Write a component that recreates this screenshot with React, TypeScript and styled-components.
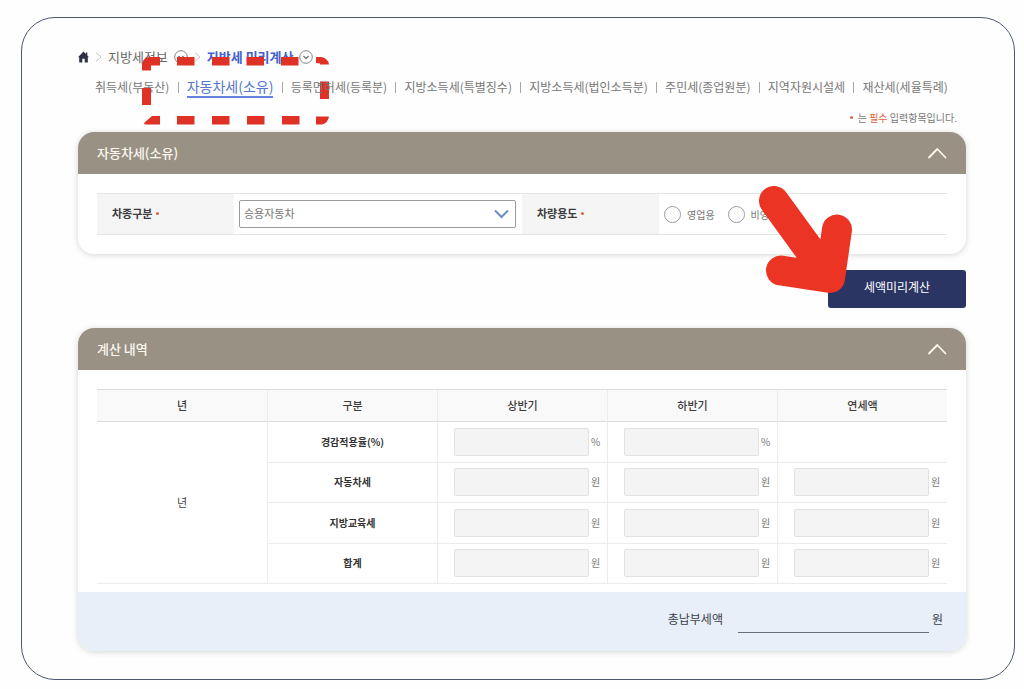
import React from "react";
import styled, { createGlobalStyle } from "styled-components";

const GlobalStyle = createGlobalStyle`
  *, *::before, *::after { box-sizing: border-box; }
  body {
    margin: 0;
    background: #fefefe;
    color: #444;
    font-family: "Noto Sans CJK KR", "Noto Sans", sans-serif;
    font-size: 12px;
  }
  button, input, select { font: inherit; color: inherit; margin: 0; }
  a { color: inherit; text-decoration: none; }
`;

const Frame = styled.main`
  margin: 17px 9px 9px 21px;
  padding: 27px 48px 28px 56px;
  border: 1px solid #4b5872;
  border-radius: 34px;
  background: #fefefe;
`;

const Breadcrumb = styled.nav`
  display: flex;
  align-items: center;
  height: 24px;
  padding-bottom: 1px;
  font-size: 13px;
  color: #6b6b6b;
`;

const CrumbLink = styled.a<{ $current?: boolean }>`
  margin-right: 6px;
  line-height: 20px;
  color: ${(p) => (p.$current ? "#4560cf" : "inherit")};
  font-weight: ${(p) => (p.$current ? 700 : 400)};
`;

const HomeLink = styled.a`
  display: flex;
`;

const CrumbArrow = styled.svg`
  margin: 0 6px;
`;

const CircleButton = styled.button`
  display: flex;
  padding: 0;
  border: 0;
  background: none;
`;

const Tabs = styled.ul`
  display: flex;
  justify-content: space-between;
  align-items: center;
  height: 22px;
  margin: 7px 18px 0 17px;
  padding: 0;
  list-style: none;
  color: #777;
  white-space: nowrap;
`;

const Tab = styled.li`
  position: relative;
`;

const TabDivider = styled.li`
  width: 1px;
  height: 11px;
  background: #a8a8a8;
`;

const TabLink = styled.a<{ $active?: boolean }>`
  display: block;
  line-height: 20px;
  font-size: ${(p) => (p.$active ? 14 : 12)}px;
  color: ${(p) => (p.$active ? "#5577cf" : "inherit")};
  border-bottom: ${(p) => (p.$active ? "2px solid #6383dc" : "0")};
`;

const DashedMark = styled.svg`
  position: absolute;
  left: -45px;
  top: -20px;
  pointer-events: none;
`;

const RequiredNote = styled.p`
  display: flex;
  align-items: center;
  justify-content: flex-end;
  gap: 3px;
  height: 16px;
  margin: 11px 9px 7px;
  font-size: 10px;
  color: #777;
`;

const RequiredWord = styled.em`
  font-style: normal;
  color: #d9673f;
`;

const Dot = styled.span`
  flex: none;
  display: inline-block;
  width: 3px;
  height: 3px;
  margin-right: 2px;
  border-radius: 50%;
  background: #dd6546;
`;

const Panel = styled.section`
  overflow: hidden;
  border-radius: 16px;
  background: #fff;
  box-shadow: 0 1px 6px rgba(0, 0, 0, 0.16);
`;

const PanelHeader = styled.header`
  display: flex;
  align-items: center;
  justify-content: space-between;
  height: 42px;
  padding: 0 19px;
  background: #999183;
  color: #fbf8f2;
`;

const PanelTitle = styled.h2`
  margin: 0;
  padding-bottom: 2px;
  font-size: 13px;
  font-weight: 500;
`;

const CollapseButton = styled.button`
  display: flex;
  padding: 0;
  border: 0;
  background: none;
`;

const FieldRow = styled.div`
  display: grid;
  grid-template-columns: 137px 1fr 137px 1fr;
  height: 42px;
  margin: 19px;
  border-top: 1px solid #e4e4e4;
  border-bottom: 1px solid #e4e4e4;
  color: #777;
`;

const FieldLabel = styled.label`
  display: flex;
  align-items: center;
  gap: 4px;
  padding: 0 0 2px 15px;
  background: #f5f5f5;
  color: #3c3c3c;
  font-size: 11px;
  font-weight: 700;
`;

const SelectBox = styled.div`
  display: grid;
  align-items: center;
  padding: 0 6px 0 5px;
  > * { grid-area: 1 / 1; }
  > svg { justify-self: end; margin-right: 7px; pointer-events: none; }
`;

const Select = styled.select`
  appearance: none;
  width: 100%;
  height: 28px;
  padding: 0 28px 2px 4px;
  border: 1px solid #9b9b9b;
  border-radius: 2px;
  background: #fff;
  font-size: 11px;
`;

const RadioGroup = styled.div`
  display: flex;
  align-items: center;
  gap: 13px;
  padding-left: 5px;
`;

const RadioLabel = styled.label`
  display: flex;
  align-items: center;
  gap: 6px;
  font-size: 10px;
`;

const Radio = styled.input`
  appearance: none;
  width: 17px;
  height: 17px;
  border: 1px solid #9a9a9a;
  border-radius: 50%;
  background: #fff;
  &:checked { box-shadow: inset 0 0 0 4px #fff; background: #2b3563; }
`;

const ActionRow = styled.div`
  display: flex;
  justify-content: flex-end;
  margin: 16px 0 20px;
`;

const ActionAnchor = styled.div`
  position: relative;
`;

const SubmitButton = styled.button`
  display: block;
  width: 138px;
  height: 38px;
  padding: 0 0 5px;
  border: 0;
  border-radius: 3px;
  background: #2b3563;
  color: #fff;
  font-size: 12px;
`;

const ArrowMark = styled.svg`
  position: absolute;
  left: -70px;
  top: -84px;
  pointer-events: none;
`;

const TableWrap = styled.div`
  padding: 19px 19px 8px;
`;

const ResultTable = styled.table`
  width: 100%;
  height: 195px;
  table-layout: fixed;
  border-collapse: separate;
  border-spacing: 0;
  border-top: 1px solid #dcdcdc;
`;

const HeadCell = styled.th`
  height: 32px;
  padding: 0 0 2px;
  background: #f9f9f9;
  border-bottom: 1px solid #dcdcdc;
  color: #3c3c3c;
  font-size: 11px;
  font-weight: 500;
  line-height: 16px;
  & + & { border-left: 1px solid #ececec; }
`;

const YearCell = styled.th`
  padding: 0 0 2px;
  border-bottom: 1px solid #ececec;
  font-size: 11px;
  font-weight: 400;
`;

const RowHead = styled.th`
  padding: 0;
  border-left: 1px solid #ececec;
  border-bottom: 1px solid #ececec;
  color: #333;
  font-size: 10px;
  font-weight: 700;
  line-height: 16px;
`;

const ValueCell = styled.td`
  padding: 0 4px 0 16px;
  border-left: 1px solid #ececec;
  border-bottom: 1px solid #ececec;
`;

const ValueField = styled.label`
  display: flex;
  align-items: center;
  gap: 2px;
  color: #777;
  font-size: 10px;
  line-height: 16px;
`;

const ValueInput = styled.input`
  flex: 1;
  min-width: 0;
  height: 28px;
  padding: 0 6px;
  border: 1px solid #e2e2e2;
  border-radius: 2px;
  background: #f4f4f4;
  text-align: right;
`;

const Unit = styled.span`
  width: 12px;
`;

const TotalBar = styled.footer`
  display: flex;
  align-items: center;
  justify-content: flex-end;
  height: 59px;
  padding: 0 23px 6px;
  background: #e9eff8;
  color: #3a3f4a;
  font-size: 12px;
`;

const TotalInput = styled.input`
  align-self: flex-end;
  width: 191px;
  height: 28px;
  margin: 0 3px 12px 15px;
  padding: 0 4px;
  border: 0;
  border-bottom: 1px solid #6b6f7c;
  background: transparent;
  text-align: right;
`;

const Separator = () => (
  <CrumbArrow width="7" height="12" viewBox="0 0 7 12" fill="none" stroke="#c4c4c4" aria-hidden="true">
    <path d="M1 1.500L6 6L1 10.500" />
  </CrumbArrow>
);

const CircleChevron = ({ label }: { label: string }) => (
  <CircleButton type="button" aria-label={label}>
    <svg width="14" height="14" viewBox="0 0 14 14" fill="none" stroke="#777">
      <circle cx="7" cy="7" r="6.300" strokeWidth="0.900" />
      <path d="M4.400 6L7 8.500L9.600 6" strokeWidth="1.400" />
    </svg>
  </CircleButton>
);

const Collapse = ({ label }: { label: string }) => (
  <CollapseButton type="button" aria-label={label}>
    <svg width="20" height="12" viewBox="0 0 20 12" fill="none" stroke="#fdf6ec" strokeWidth="1.800" strokeLinecap="round" strokeLinejoin="round">
      <path d="M2 10.500L10.300 2L18.500 10.500" />
    </svg>
  </CollapseButton>
);

const tabs = [
  "취득세(부동산)",
  "자동차세(소유)",
  "등록면허세(등록분)",
  "지방소득세(특별징수)",
  "지방소득세(법인소득분)",
  "주민세(종업원분)",
  "지역자원시설세",
  "재산세(세율특례)",
];
const activeTab = tabs[1];

const columns = ["년", "구분", "상반기", "하반기", "연세액"];
const rows = [
  { name: "경감적용율(%)", unit: "%", cells: 2 },
  { name: "자동차세", unit: "원", cells: 3 },
  { name: "지방교육세", unit: "원", cells: 3 },
  { name: "합계", unit: "원", cells: 3 },
];

export default function App() {
  return (
    <>
      <GlobalStyle />
      <Frame>
        <Breadcrumb aria-label="현재 위치">
          <HomeLink href="#" aria-label="홈">
            <svg width="11" height="12" viewBox="0 0 11 12" fill="#2f3047">
              <path d="M5.500 0.500L0 6.200H1.200V11.500H4.300V7.800H6.700V11.500H9.800V6.200H11L9.300 4.400V1.500H7.800V2.900Z" />
            </svg>
          </HomeLink>
          <Separator />
          <CrumbLink href="#">지방세정보</CrumbLink>
          <CircleChevron label="지방세정보 메뉴" />
          <Separator />
          <CrumbLink href="#" $current>지방세 미리계산</CrumbLink>
          <CircleChevron label="지방세 미리계산 메뉴" />
        </Breadcrumb>

        <Tabs>
          {tabs.map((tab, i) => (
            <React.Fragment key={tab}>
              {i > 0 && <TabDivider aria-hidden="true" />}
              <Tab>
                <TabLink href="#" $active={tab === activeTab}>{tab}</TabLink>
                {tab === activeTab && (
                  <DashedMark width="188" height="70" viewBox="0 0 188 70" fill="#e03127" aria-hidden="true">
                    <path d="M0 8Q1 2 7 1H18V9.500H9V14.500H0Z" />
                    <path d="M35 1h17.500v8.500H35zM70 1h17.500v8.500H70zM104.500 1h17.500v8.500H104.500zM139 1h17.500v8.500H139z" />
                    <path d="M174 1H179Q186 2 187 8.500H178V7.500L174 7Z" />
                    <path d="M0 32h9v17H0zM178 25.500h9v17.500H178z" />
                    <path d="M2 67L10 60H18V68.500H5Q2 68.500 2 67Z" />
                    <path d="M35 60h17.500v8.500H35zM70 60h17.500v8.500H70zM105 60h17.500v8.500H105zM140 60h17.500v8.500H140z" />
                    <path d="M174 60.500H187Q186 67 180 68.500H174Z" />
                  </DashedMark>
                )}
              </Tab>
            </React.Fragment>
          ))}
        </Tabs>

        <RequiredNote>
          <Dot />
          <span>는 <RequiredWord>필수</RequiredWord> 입력항목입니다.</span>
        </RequiredNote>

        <Panel>
          <PanelHeader>
            <PanelTitle>자동차세(소유)</PanelTitle>
            <Collapse label="자동차세(소유) 접기" />
          </PanelHeader>
          <FieldRow>
            <FieldLabel htmlFor="car-type">차종구분 <Dot /></FieldLabel>
            <SelectBox>
              <Select id="car-type" defaultValue="승용자동차">
                <option>승용자동차</option>
              </Select>
              <svg width="15" height="10" viewBox="0 0 15 10" fill="none" stroke="#6f89cb" strokeWidth="2" aria-hidden="true">
                <path d="M1 1.500L7.500 8L14 1.500" />
              </svg>
            </SelectBox>
            <FieldLabel as="div" id="car-use">차량용도 <Dot /></FieldLabel>
            <RadioGroup role="radiogroup" aria-labelledby="car-use">
              <RadioLabel><Radio type="radio" name="use" />영업용</RadioLabel>
              <RadioLabel><Radio type="radio" name="use" />비영업용</RadioLabel>
            </RadioGroup>
          </FieldRow>
        </Panel>

        <ActionRow>
          <ActionAnchor>
            <SubmitButton type="button">세액미리계산</SubmitButton>
            <ArrowMark width="96" height="108" viewBox="0 0 96 108" fill="none" stroke="#ec3425" strokeWidth="30" strokeLinecap="round" strokeLinejoin="round" aria-hidden="true">
              <path d="M16 15L72 92M79 43.500L72 92L23 84.500" />
            </ArrowMark>
          </ActionAnchor>
        </ActionRow>

        <Panel>
          <PanelHeader>
            <PanelTitle>계산 내역</PanelTitle>
            <Collapse label="계산 내역 접기" />
          </PanelHeader>
          <TableWrap>
            <ResultTable>
              <thead>
                <tr>
                  {columns.map((c) => <HeadCell key={c} scope="col">{c}</HeadCell>)}
                </tr>
              </thead>
              <tbody>
                {rows.map((row, i) => (
                  <tr key={row.name}>
                    {i === 0 && <YearCell rowSpan={4} scope="rowgroup">년</YearCell>}
                    <RowHead scope="row">{row.name}</RowHead>
                    {[0, 1, 2].map((n) => (
                      <ValueCell key={n}>
                        {n < row.cells && (
                          <ValueField>
                            <ValueInput readOnly aria-label={`${row.name} ${columns[n + 2]}`} />
                            <Unit>{row.unit}</Unit>
                          </ValueField>
                        )}
                      </ValueCell>
                    ))}
                  </tr>
                ))}
              </tbody>
            </ResultTable>
          </TableWrap>
          <TotalBar>
            <label htmlFor="total">총납부세액</label>
            <TotalInput id="total" readOnly />
            <span>원</span>
          </TotalBar>
        </Panel>
      </Frame>
    </>
  );
}
